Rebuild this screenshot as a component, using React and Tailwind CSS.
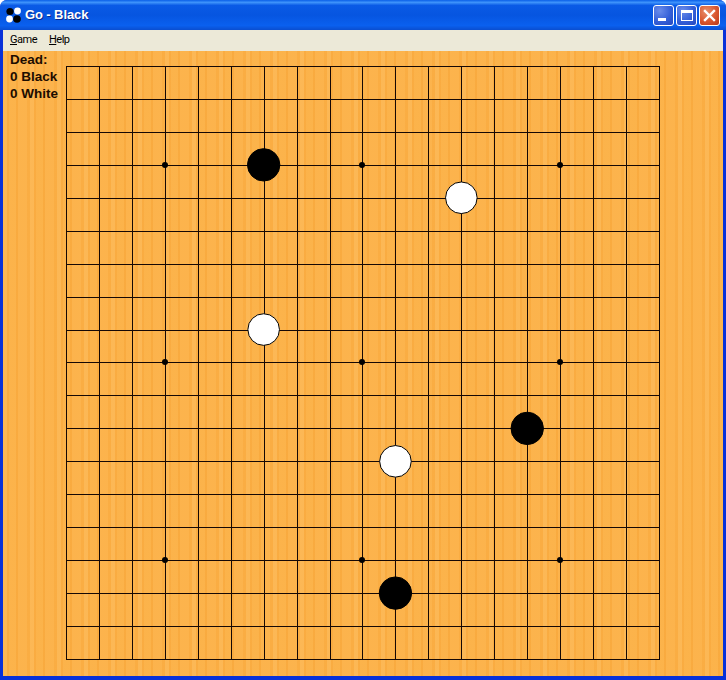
import React from 'react';

const CELL = 593 / 18;
const STARS = [3, 9, 15];
const STONES = [
  { col: 6, row: 3, color: 'black' },
  { col: 12, row: 4, color: 'white' },
  { col: 6, row: 8, color: 'white' },
  { col: 14, row: 11, color: 'black' },
  { col: 10, row: 12, color: 'white' },
  { col: 10, row: 16, color: 'black' },
];
const pos = (i) => Math.round(i * CELL - 0.01) + 0.5;

function AppIcon() {
  return (
    <svg width="17" height="17" viewBox="0 0 17 17" className="shrink-0">
      <circle cx="5" cy="4.5" r="3.6" fill="#000" />
      <circle cx="12.5" cy="4" r="3.4" fill="#fff" />
      <circle cx="4.5" cy="12" r="3.4" fill="#fff" />
      <circle cx="12" cy="12" r="3.8" fill="#000" />
    </svg>
  );
}

function WinButton({ kind }) {
  const face =
    kind === 'close'
      ? 'bg-[radial-gradient(circle_at_35%_30%,#e8906c,#d9572f_55%,#b8391a)]'
      : 'bg-[radial-gradient(circle_at_30%_25%,#6a8cea,#3560d8_55%,#2448c0)]';
  return (
    <div className={`w-[21px] h-[21px] rounded-[3px] border border-white flex items-center justify-center ${face}`}>
      {kind === 'min' && <div className="w-[8px] h-[3px] bg-white mt-[9px] mr-[4px]" />}
      {kind === 'max' && (
        <div className="w-[12px] h-[11px] border border-white border-t-[3px]" />
      )}
      {kind === 'close' && (
        <svg width="13" height="13" viewBox="0 0 13 13">
          <path d="M2 2l9 9M11 2l-9 9" stroke="#fff" strokeWidth="2.4" strokeLinecap="square" />
        </svg>
      )}
    </div>
  );
}

function Board() {
  const lines = Array.from({ length: 19 }, (_, i) => i);
  return (
    <svg width="594" height="594" viewBox="0 0 594 594" className="block shrink-0">
      <g stroke="#160804" strokeWidth="1" shapeRendering="crispEdges">
        {lines.map((i) => (
          <line key={`v${i}`} x1={pos(i)} y1="0" x2={pos(i)} y2="594" />
        ))}
        {lines.map((i) => (
          <line key={`h${i}`} x1="0" y1={pos(i)} x2="594" y2={pos(i)} />
        ))}
      </g>
      {STARS.map((c) =>
        STARS.map((r) => (
          <circle key={`${c}-${r}`} cx={pos(c) - 0.5} cy={pos(r) - 0.5} r="3" fill="#000" />
        ))
      )}
      {STONES.map((s) => (
        <circle
          key={`${s.col}-${s.row}`}
          cx={s.col * CELL}
          cy={s.row * CELL}
          r={s.color === 'black' ? 16.2 : 15.8}
          fill={s.color === 'black' ? '#000' : '#fff'}
          stroke="#000"
          strokeWidth="1"
        />
      ))}
    </svg>
  );
}

export default function App() {
  return (
    <div className="w-[726px] h-[680px] flex flex-col overflow-hidden rounded-t-[7px] bg-[#0831d9] font-['Liberation_Sans',sans-serif]">
      {/* Title bar */}
      <div className="h-[30px] shrink-0 flex items-center pl-[5px] pr-[6px] gap-[3px] bg-[linear-gradient(180deg,#0a5fe8_0%,#3e93fb_8%,#0a5ae6_18%,#0655e0_50%,#0a60ef_85%,#0a4ed0_100%)]">
        <AppIcon />
        <span className="text-white font-bold text-[13px] tracking-[-0.1px] [text-shadow:1px_1px_0_#0a2a90]">Go - Black</span>
        <div className="ml-auto flex gap-[2px]">
          <WinButton kind="min" />
          <WinButton kind="max" />
          <WinButton kind="close" />
        </div>
      </div>

      {/* Window body, blue frame round it */}
      <div className="flex-1 flex flex-col mx-[3px] mb-[4px] min-h-0">
        <div className="h-[21px] shrink-0 flex items-center gap-[12px] pl-[7px] bg-[#ece9d8] text-[11px] tracking-[-0.5px] text-black font-['Roboto',sans-serif]">
          <span><u>G</u>ame</span>
          <span><u>H</u>elp</span>
        </div>
        <div className="flex-1 flex pt-[15px] min-h-0 bg-[#fbb148] bg-[repeating-linear-gradient(90deg,rgba(255,196,110,0.35)_0px,rgba(255,196,110,0.35)_4px,rgba(246,160,50,0.3)_4px,rgba(246,160,50,0.3)_6px,rgba(255,190,90,0.15)_6px,rgba(255,190,90,0.15)_13px,rgba(244,156,44,0.3)_13px,rgba(244,156,44,0.3)_15px,rgba(255,186,90,0.25)_15px,rgba(255,186,90,0.25)_24px,rgba(248,164,56,0.3)_24px,rgba(248,164,56,0.3)_27px)]">
          <div className="w-[63px] shrink-0 pl-[7px] -mt-[15px] text-[13.5px] leading-[17px] font-bold text-[#1c0c00]">
            <div>Dead:</div>
            <div>0 Black</div>
            <div>0 White</div>
          </div>
          <Board />
        </div>
      </div>
    </div>
  );
}
